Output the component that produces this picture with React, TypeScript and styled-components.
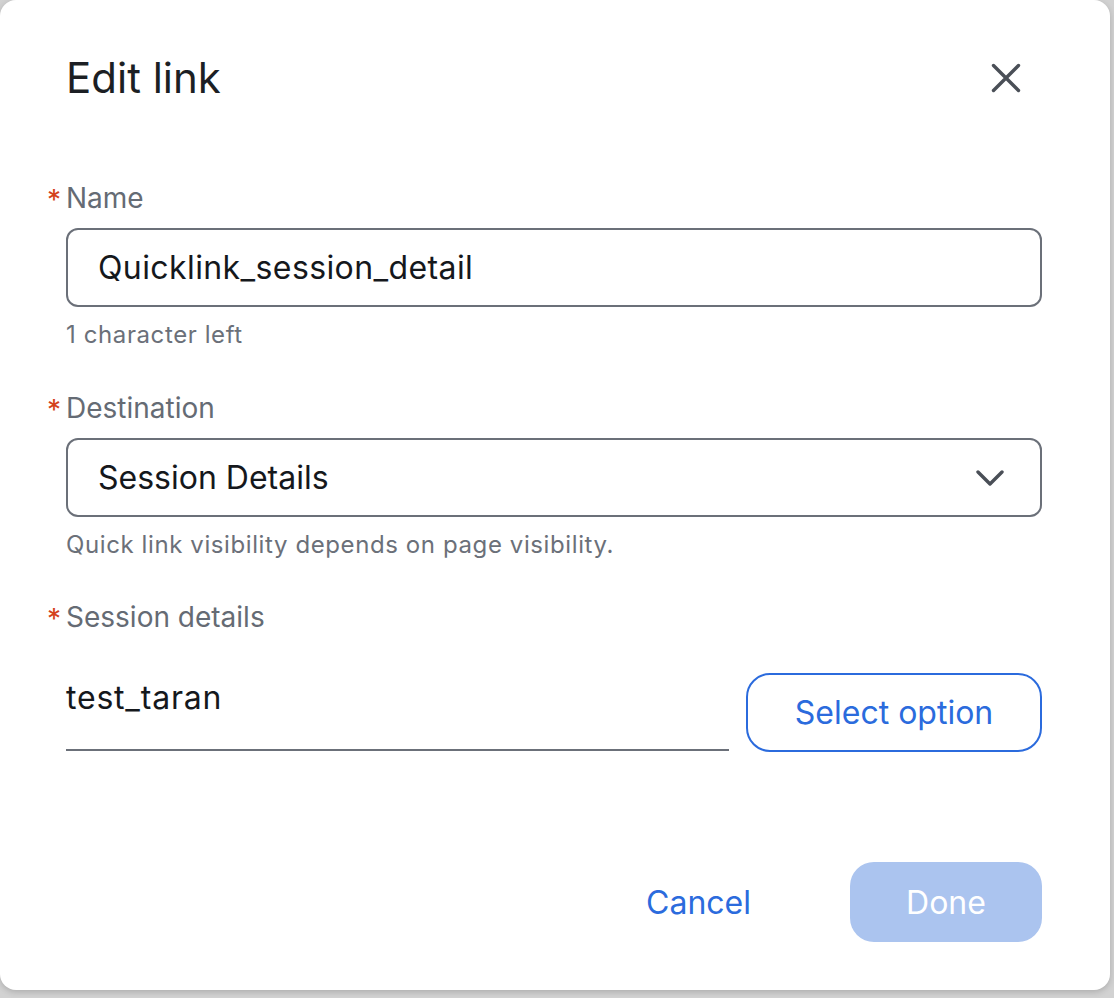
import React from 'react'
import styled, { createGlobalStyle } from 'styled-components'

const GlobalStyle = createGlobalStyle`
  html, body {
    margin: 0;
    padding: 0;
    background: #d2d2d2;
    font-family: Inter, 'Noto Sans', 'Liberation Sans', sans-serif;
    -webkit-font-smoothing: antialiased;
  }
  * { box-sizing: border-box; }
`

const Page = styled.div`
  width: 1114px;
  height: 998px;
  overflow: hidden;
`

const Panel = styled.div`
  width: 1110px;
  height: 990px;
  background: #ffffff;
  border-radius: 16px;
  box-shadow: 0 2px 6px rgba(0, 0, 0, 0.18);
  padding: 53px 68px 48px 66px;
  display: flex;
  flex-direction: column;
`

const Header = styled.div`
  display: flex;
  align-items: center;
  justify-content: space-between;
  height: 50px;
`

const Title = styled.h1`
  margin: 0;
  font-size: 42px;
  line-height: 50px;
  font-weight: 400;
  color: #1c1f24;
`

const CloseButton = styled.button`
  width: 44px;
  height: 44px;
  margin-right: 14px;
  border: none;
  background: none;
  padding: 0;
  display: flex;
  align-items: center;
  justify-content: center;
  color: #4a4f57;
  cursor: pointer;
`

const Field = styled.div<{ top: number }>`
  margin-top: ${({ top }) => top}px;
  display: flex;
  flex-direction: column;
`

const Label = styled.div`
  display: flex;
  align-items: flex-start;
  font-size: 28px;
  line-height: 36px;
  color: #656b74;
  margin-bottom: 12px;
`

const Required = styled.span`
  color: #d4411c;
  margin-left: -19px;
  width: 19px;
  font-size: 28px;
  line-height: 36px;
  position: relative;
  top: 2px;
`

const Box = styled.div<{ spaced?: boolean }>`
  height: 79px;
  border: 2px solid #6b7079;
  border-radius: 12px;
  display: flex;
  align-items: center;
  justify-content: space-between;
  padding: 0 36px 0 30px;
  font-size: 32px;
  letter-spacing: ${({ spaced }) => (spaced ? '0.4px' : '0')};
  color: #15181c;
`

const Helper = styled.div`
  margin-top: 12px;
  font-size: 24px;
  line-height: 32px;
  letter-spacing: 0.6px;
  color: #6b7079;
`

const PickRow = styled.div`
  display: grid;
  grid-template-columns: 1fr 296px;
  column-gap: 17px;
  margin-top: 26px;
`

const Underlined = styled.div`
  height: 78px;
  border-bottom: 2px solid #6b7079;
  padding-top: 5px;
  font-size: 32px;
  line-height: 40px;
  letter-spacing: 0.8px;
  color: #15181c;
`

const OutlineButton = styled.button`
  height: 79px;
  border: 2px solid #2b6bdd;
  border-radius: 24px;
  background: #ffffff;
  color: #2b6bdd;
  font-family: inherit;
  font-size: 32px;
`

const Footer = styled.div`
  margin-top: auto;
  display: flex;
  justify-content: flex-end;
  align-items: center;
  gap: 99px;
`

const TextButton = styled.button`
  height: 80px;
  border: none;
  background: none;
  padding: 0;
  color: #2b6bdd;
  font-family: inherit;
  font-size: 32px;
`

const PrimaryButton = styled.button<{ disabled?: boolean }>`
  width: 192px;
  height: 80px;
  border: none;
  border-radius: 24px;
  background: ${({ disabled }) => (disabled ? '#abc4ef' : '#2b6bdd')};
  color: #ffffff;
  font-family: inherit;
  font-size: 32px;
`

const CloseIcon = () => (
  <svg width="30" height="30" viewBox="0 0 30 30" fill="none">
    <path d="M2.5 2.5L27.5 27.5M27.5 2.5L2.5 27.5" stroke="currentColor" strokeWidth="3.4" strokeLinecap="round" />
  </svg>
)

const ChevronDown = () => (
  <svg width="28" height="16" viewBox="0 0 28 16" fill="none">
    <path d="M2 2L14 14L26 2" stroke="#4a4f57" strokeWidth="3.4" strokeLinecap="round" strokeLinejoin="round" />
  </svg>
)

export default function App() {
  return (
    <Page>
      <GlobalStyle />
      <Panel>
        <Header>
          <Title>Edit link</Title>
          <CloseButton aria-label="Close">
            <CloseIcon />
          </CloseButton>
        </Header>

        <Field top={77}>
          <Label>
            <Required>*</Required>Name
          </Label>
          <Box spaced>Quicklink_session_detail</Box>
          <Helper>1 character left</Helper>
        </Field>

        <Field top={39}>
          <Label>
            <Required>*</Required>Destination
          </Label>
          <Box>
            Session Details
            <ChevronDown />
          </Box>
          <Helper>Quick link visibility depends on page visibility.</Helper>
        </Field>

        <Field top={38}>
          <Label>
            <Required>*</Required>Session details
          </Label>
        </Field>
        <PickRow>
          <Underlined>test_taran</Underlined>
          <OutlineButton>Select option</OutlineButton>
        </PickRow>

        <Footer>
          <TextButton>Cancel</TextButton>
          <PrimaryButton disabled>Done</PrimaryButton>
        </Footer>
      </Panel>
    </Page>
  )
}
